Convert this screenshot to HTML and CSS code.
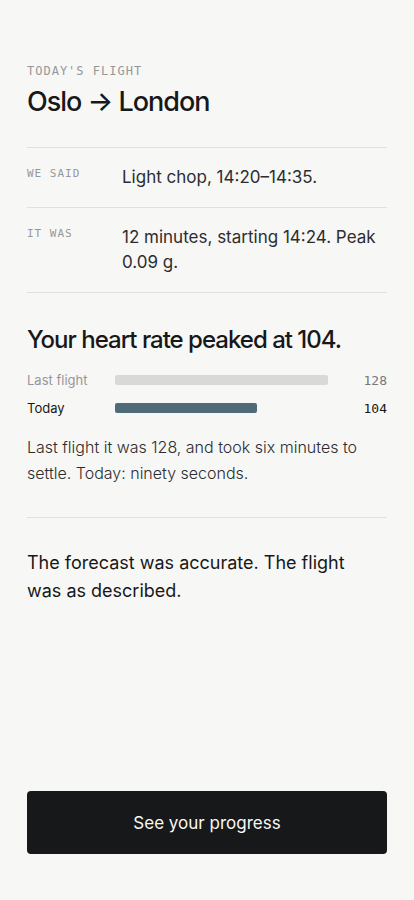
FILE: index.html
```html
<!DOCTYPE html>
<html lang="en">
<head>
  <meta charset="utf-8">
  <meta name="viewport" content="width=device-width, initial-scale=1">
  <title>Today's flight</title>
  <link rel="stylesheet" href="styles.css">
</head>
<body>
  <main class="screen">
    <header class="header">
      <p class="label">TODAY'S FLIGHT</p>
      <h1>Oslo → London</h1>
    </header>

    <dl class="facts">
      <div class="fact">
        <dt class="label">WE SAID</dt>
        <dd>Light chop, 14:20–14:35.</dd>
      </div>
      <div class="fact">
        <dt class="label">IT WAS</dt>
        <dd>12 minutes, starting 14:24. Peak 0.09 g.</dd>
      </div>
    </dl>

    <section class="heart">
      <h2>Your heart rate peaked at 104.</h2>
      <div class="bar-row">
        <span class="bar-name">Last flight</span>
        <div class="track"><div class="bar" style="width: 92%"></div></div>
        <span class="bar-value">128</span>
      </div>
      <div class="bar-row today">
        <span class="bar-name">Today</span>
        <div class="track"><div class="bar" style="width: 61%"></div></div>
        <span class="bar-value">104</span>
      </div>
      <p class="note">Last flight it was 128, and took six minutes to settle. Today: ninety seconds.</p>
    </section>

    <p class="summary">The forecast was accurate. The flight was as described.</p>

    <button type="button" class="btn">See your progress</button>
  </main>
</body>
</html>
```

FILE: styles.css
```css
* {
  box-sizing: border-box;
}
body {
  margin: 0;
  background-color: #f7f7f5;
  color: #17181a;
  font-family: Inter, "Liberation Sans", sans-serif;
}
h1, h2, p, dl, dd {
  margin: 0;
}
.screen {
  display: flex;
  flex-direction: column;
  min-height: 100vh;
  padding: 62px 27px 46px;
}
.label {
  font-family: "DejaVu Sans Mono", monospace;
  font-size: 11px;
  line-height: 18px;
  letter-spacing: 1px;
  color: #96979a;
}
.header .label {
  font-size: 12px;
}
h1 {
  margin-top: 4px;
  font-size: 27px;
  line-height: 36px;
  font-weight: 500;
  letter-spacing: -1px;
}
.facts {
  margin-top: 27px;
  border-top: 1px solid #e0e0de;
}
.fact {
  display: flex;
  gap: 14px;
  padding: 17px 0;
  border-bottom: 1px solid #e0e0de;
}
.fact dt {
  flex: 0 0 81px;
}
.fact dd {
  font-size: 17px;
  line-height: 25px;
  color: #2c2d30;
}
.heart {
  padding: 31px 0;
  border-bottom: 1px solid #e0e0de;
}
h2 {
  margin-bottom: 14px;
  font-size: 24px;
  line-height: 32px;
  font-weight: 500;
  letter-spacing: -1px;
}
.bar-row {
  display: flex;
  align-items: center;
  gap: 14px;
  height: 20px;
  margin-bottom: 8px;
  font-size: 13px;
  color: #96979a;
}
.bar-name {
  flex: 0 0 74px;
}
.track {
  flex: 1;
}
.bar {
  height: 10px;
  border-radius: 2px;
  background-color: #d9d9d7;
}
.bar-value {
  flex: 0 0 26px;
  font-family: "DejaVu Sans Mono", monospace;
  text-align: right;
  color: #77787a;
}
.today,
.today .bar-value {
  color: #17181a;
}
.today .bar {
  background-color: #4f6b78;
}
.note {
  margin-top: 16px;
  font-size: 16px;
  line-height: 26px;
  font-weight: 300;
  color: #2c2d30;
}
.summary {
  margin-top: 31px;
  padding-right: 27px;
  font-size: 18px;
  line-height: 28px;
}
.btn {
  width: 100%;
  height: 63px;
  margin-top: auto;
  border: none;
  border-radius: 4px;
  background-color: #17181a;
  color: #f7f7f5;
  font-family: inherit;
  font-size: 17px;
  cursor: pointer;
}
```
